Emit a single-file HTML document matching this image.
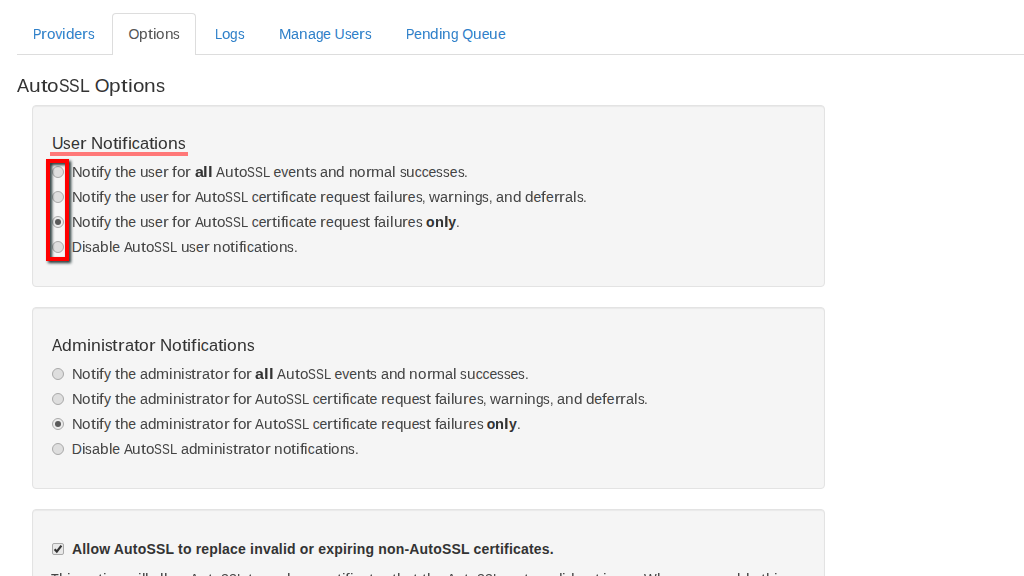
<!DOCTYPE html>
<html><head><meta charset="utf-8">
<style>
html,body{margin:0;padding:0;background:#fff;width:1024px;height:576px;overflow:hidden;position:relative}
body{font-family:"Liberation Sans",sans-serif;color:#444;font-size:14px}
.t{position:absolute;white-space:nowrap;line-height:20px}
.c span{display:inline-block;transform-origin:0 0}
.tab{color:#2f80c9}
.tabline{position:absolute;left:17px;top:54px;width:1007px;height:1px;background:#ddd}
.activetab{position:absolute;left:112px;top:13px;width:84px;height:42px;border:1px solid #ddd;border-bottom:none;border-radius:4px 4px 0 0;background:#fff;box-sizing:border-box}
.well{position:absolute;left:32px;width:793px;background:#f5f5f5;border:1px solid #e3e3e3;border-radius:4px;box-shadow:inset 0 1px 1px rgba(0,0,0,.05);box-sizing:border-box}
.radio{position:absolute;left:52px;width:12px;height:12px;border-radius:50%;box-sizing:border-box;border:1px solid #a9a9a9;background:#dedede}
.radio.on{background:#ececec}
.radio.on::after{content:"";position:absolute;left:2px;top:2px;width:6px;height:6px;border-radius:50%;background:#5a5a5a}
b{font-weight:700;color:#333}
</style></head><body>
<div class="tabline"></div>
<div class="activetab"></div>
<div class="t c" id="tab1" style="left:32.5px;top:24px;color:#2f80c9"><span style="width:8.51px;transform:scaleX(0.911)">P</span><span style="width:5.76px;transform:scaleX(1.234)">r</span><span style="width:8.46px;transform:scaleX(1.086)">o</span><span style="width:7.03px">v</span><span style="width:3.54px;transform:scaleX(1.138)">i</span><span style="width:8.54px;transform:scaleX(1.097)">d</span><span style="width:7.79px">e</span><span style="width:5.76px;transform:scaleX(1.234)">r</span><span style="width:6.68px;transform:scaleX(0.954)">s</span></div>
<div class="t c" id="tab2" style="left:128.5px;top:24px;color:#555"><span style="width:10.87px">O</span><span style="width:8.54px;transform:scaleX(1.097)">p</span><span style="width:4.94px;transform:scaleX(1.270)">t</span><span style="width:3.54px;transform:scaleX(1.138)">i</span><span style="width:8.46px;transform:scaleX(1.086)">o</span><span style="width:8.58px;transform:scaleX(1.102)">n</span><span style="width:6.68px;transform:scaleX(0.954)">s</span></div>
<div class="t c" id="tab3" style="left:214.5px;top:24px;color:#2f80c9"><span style="width:7.23px;transform:scaleX(0.928)">L</span><span style="width:8.46px;transform:scaleX(1.086)">o</span><span style="width:7.62px;transform:scaleX(0.978)">g</span><span style="width:6.68px;transform:scaleX(0.954)">s</span></div>
<div class="t c" id="tab4" style="left:278.5px;top:24px;color:#2f80c9"><span style="width:12.46px;transform:scaleX(1.068)">M</span><span style="width:7.99px;transform:scaleX(1.026)">a</span><span style="width:8.58px;transform:scaleX(1.102)">n</span><span style="width:7.99px;transform:scaleX(1.026)">a</span><span style="width:7.62px;transform:scaleX(0.978)">g</span><span style="width:7.79px">e</span><span style="width:3.64px">&nbsp;</span><span style="width:10.05px">U</span><span style="width:6.68px;transform:scaleX(0.954)">s</span><span style="width:7.79px">e</span><span style="width:5.76px;transform:scaleX(1.234)">r</span><span style="width:6.68px;transform:scaleX(0.954)">s</span></div>
<div class="t c" id="tab5" style="left:405.5px;top:24px;color:#2f80c9"><span style="width:8.51px;transform:scaleX(0.911)">P</span><span style="width:7.79px">e</span><span style="width:8.58px;transform:scaleX(1.102)">n</span><span style="width:8.54px;transform:scaleX(1.097)">d</span><span style="width:3.54px;transform:scaleX(1.138)">i</span><span style="width:8.58px;transform:scaleX(1.102)">n</span><span style="width:7.62px;transform:scaleX(0.978)">g</span><span style="width:3.64px">&nbsp;</span><span style="width:10.87px">Q</span><span style="width:8.58px;transform:scaleX(1.102)">u</span><span style="width:7.79px">e</span><span style="width:8.58px;transform:scaleX(1.102)">u</span><span style="width:7.79px">e</span></div>
<div class="t c" id="h1" style="left:17px;top:76px;font-size:19px;color:#333"><span style="width:12.06px;transform:scaleX(0.952)">A</span><span style="width:11.64px;transform:scaleX(1.102)">u</span><span style="width:6.71px;transform:scaleX(1.270)">t</span><span style="width:11.48px;transform:scaleX(1.086)">o</span><span style="width:10.55px;transform:scaleX(0.832)">S</span><span style="width:10.55px;transform:scaleX(0.832)">S</span><span style="width:9.81px;transform:scaleX(0.928)">L</span><span style="width:4.94px">&nbsp;</span><span style="width:14.75px">O</span><span style="width:11.60px;transform:scaleX(1.097)">p</span><span style="width:6.71px;transform:scaleX(1.270)">t</span><span style="width:4.81px;transform:scaleX(1.138)">i</span><span style="width:11.48px;transform:scaleX(1.086)">o</span><span style="width:11.64px;transform:scaleX(1.102)">n</span><span style="width:9.06px;transform:scaleX(0.954)">s</span></div>
<div class="well" style="top:105px;height:182px"></div>
<div class="t c" id="h2" style="left:52px;top:134px;font-size:16px;color:#333"><span style="width:11.48px">U</span><span style="width:7.63px;transform:scaleX(0.954)">s</span><span style="width:8.90px">e</span><span style="width:6.58px;transform:scaleX(1.234)">r</span><span style="width:4.16px">&nbsp;</span><span style="width:12.18px;transform:scaleX(1.054)">N</span><span style="width:9.66px;transform:scaleX(1.086)">o</span><span style="width:5.65px;transform:scaleX(1.270)">t</span><span style="width:4.05px;transform:scaleX(1.138)">i</span><span style="width:5.38px;transform:scaleX(1.209)">f</span><span style="width:4.05px;transform:scaleX(1.138)">i</span><span style="width:7.91px">c</span><span style="width:9.13px;transform:scaleX(1.026)">a</span><span style="width:5.65px;transform:scaleX(1.270)">t</span><span style="width:4.05px;transform:scaleX(1.138)">i</span><span style="width:9.66px;transform:scaleX(1.086)">o</span><span style="width:9.80px;transform:scaleX(1.102)">n</span><span style="width:7.63px;transform:scaleX(0.954)">s</span></div>
<div style="position:absolute;left:50px;top:152px;width:138px;height:4px;background:#ff7878"></div>
<div class="radio" style="top:166px"></div>
<div class="radio" style="top:191px"></div>
<div class="radio on" style="top:216px"></div>
<div class="radio" style="top:241px"></div>
<div class="t c" id="r10" style="left:71.8px;top:162px"><span style="width:10.66px;transform:scaleX(1.054)">N</span><span style="width:8.46px;transform:scaleX(1.086)">o</span><span style="width:4.94px;transform:scaleX(1.270)">t</span><span style="width:3.54px;transform:scaleX(1.138)">i</span><span style="width:4.70px;transform:scaleX(1.209)">f</span><span style="width:7.04px">y</span><span style="width:3.64px">&nbsp;</span><span style="width:4.94px;transform:scaleX(1.270)">t</span><span style="width:8.58px;transform:scaleX(1.102)">h</span><span style="width:7.79px">e</span><span style="width:3.64px">&nbsp;</span><span style="width:8.58px;transform:scaleX(1.102)">u</span><span style="width:6.68px;transform:scaleX(0.954)">s</span><span style="width:7.79px">e</span><span style="width:5.76px;transform:scaleX(1.234)">r</span><span style="width:3.64px">&nbsp;</span><span style="width:4.70px;transform:scaleX(1.209)">f</span><span style="width:8.46px;transform:scaleX(1.086)">o</span><span style="width:5.76px;transform:scaleX(1.234)">r</span><span style="width:3.64px">&nbsp;</span><b><span style="width:8.89px;transform:scaleX(1.141)">a</span><span style="width:4.62px;transform:scaleX(1.187)">l</span><span style="width:4.62px;transform:scaleX(1.187)">l</span></b><span style="width:3.64px">&nbsp;</span><span style="width:8.89px;transform:scaleX(0.952)">A</span><span style="width:8.58px;transform:scaleX(1.102)">u</span><span style="width:4.94px;transform:scaleX(1.270)">t</span><span style="width:8.46px;transform:scaleX(1.086)">o</span><span style="width:7.77px;transform:scaleX(0.832)">S</span><span style="width:7.77px;transform:scaleX(0.832)">S</span><span style="width:7.23px;transform:scaleX(0.928)">L</span><span style="width:3.64px">&nbsp;</span><span style="width:7.79px">e</span><span style="width:7.03px">v</span><span style="width:7.79px">e</span><span style="width:8.58px;transform:scaleX(1.102)">n</span><span style="width:4.94px;transform:scaleX(1.270)">t</span><span style="width:6.68px;transform:scaleX(0.954)">s</span><span style="width:3.64px">&nbsp;</span><span style="width:7.99px;transform:scaleX(1.026)">a</span><span style="width:8.58px;transform:scaleX(1.102)">n</span><span style="width:8.54px;transform:scaleX(1.097)">d</span><span style="width:3.64px">&nbsp;</span><span style="width:8.58px;transform:scaleX(1.102)">n</span><span style="width:8.46px;transform:scaleX(1.086)">o</span><span style="width:5.76px;transform:scaleX(1.234)">r</span><span style="width:13.02px;transform:scaleX(1.116)">m</span><span style="width:7.99px;transform:scaleX(1.026)">a</span><span style="width:3.54px;transform:scaleX(1.138)">l</span><span style="width:3.64px">&nbsp;</span><span style="width:6.68px;transform:scaleX(0.954)">s</span><span style="width:8.58px;transform:scaleX(1.102)">u</span><span style="width:6.92px">c</span><span style="width:6.92px">c</span><span style="width:7.79px">e</span><span style="width:6.68px;transform:scaleX(0.954)">s</span><span style="width:6.68px;transform:scaleX(0.954)">s</span><span style="width:7.79px">e</span><span style="width:6.68px;transform:scaleX(0.954)">s</span><span style="width:3.73px;transform:scaleX(0.957)">.</span></div>
<div class="t c" id="r11" style="left:71.8px;top:187px"><span style="width:10.66px;transform:scaleX(1.054)">N</span><span style="width:8.46px;transform:scaleX(1.086)">o</span><span style="width:4.94px;transform:scaleX(1.270)">t</span><span style="width:3.54px;transform:scaleX(1.138)">i</span><span style="width:4.70px;transform:scaleX(1.209)">f</span><span style="width:7.04px">y</span><span style="width:3.64px">&nbsp;</span><span style="width:4.94px;transform:scaleX(1.270)">t</span><span style="width:8.58px;transform:scaleX(1.102)">h</span><span style="width:7.79px">e</span><span style="width:3.64px">&nbsp;</span><span style="width:8.58px;transform:scaleX(1.102)">u</span><span style="width:6.68px;transform:scaleX(0.954)">s</span><span style="width:7.79px">e</span><span style="width:5.76px;transform:scaleX(1.234)">r</span><span style="width:3.64px">&nbsp;</span><span style="width:4.70px;transform:scaleX(1.209)">f</span><span style="width:8.46px;transform:scaleX(1.086)">o</span><span style="width:5.76px;transform:scaleX(1.234)">r</span><span style="width:3.64px">&nbsp;</span><span style="width:8.89px;transform:scaleX(0.952)">A</span><span style="width:8.58px;transform:scaleX(1.102)">u</span><span style="width:4.94px;transform:scaleX(1.270)">t</span><span style="width:8.46px;transform:scaleX(1.086)">o</span><span style="width:7.77px;transform:scaleX(0.832)">S</span><span style="width:7.77px;transform:scaleX(0.832)">S</span><span style="width:7.23px;transform:scaleX(0.928)">L</span><span style="width:3.64px">&nbsp;</span><span style="width:6.92px">c</span><span style="width:7.79px">e</span><span style="width:5.76px;transform:scaleX(1.234)">r</span><span style="width:4.94px;transform:scaleX(1.270)">t</span><span style="width:3.54px;transform:scaleX(1.138)">i</span><span style="width:4.70px;transform:scaleX(1.209)">f</span><span style="width:3.54px;transform:scaleX(1.138)">i</span><span style="width:6.92px">c</span><span style="width:7.99px;transform:scaleX(1.026)">a</span><span style="width:4.94px;transform:scaleX(1.270)">t</span><span style="width:7.79px">e</span><span style="width:3.64px">&nbsp;</span><span style="width:5.76px;transform:scaleX(1.234)">r</span><span style="width:7.79px">e</span><span style="width:8.54px;transform:scaleX(1.097)">q</span><span style="width:8.58px;transform:scaleX(1.102)">u</span><span style="width:7.79px">e</span><span style="width:6.68px;transform:scaleX(0.954)">s</span><span style="width:4.94px;transform:scaleX(1.270)">t</span><span style="width:3.64px">&nbsp;</span><span style="width:4.70px;transform:scaleX(1.209)">f</span><span style="width:7.99px;transform:scaleX(1.026)">a</span><span style="width:3.54px;transform:scaleX(1.138)">i</span><span style="width:3.54px;transform:scaleX(1.138)">l</span><span style="width:8.58px;transform:scaleX(1.102)">u</span><span style="width:5.76px;transform:scaleX(1.234)">r</span><span style="width:7.79px">e</span><span style="width:6.68px;transform:scaleX(0.954)">s</span><span style="width:3.50px;transform:scaleX(0.899)">,</span><span style="width:3.64px">&nbsp;</span><span style="width:10.94px;transform:scaleX(1.082)">w</span><span style="width:7.99px;transform:scaleX(1.026)">a</span><span style="width:5.76px;transform:scaleX(1.234)">r</span><span style="width:8.58px;transform:scaleX(1.102)">n</span><span style="width:3.54px;transform:scaleX(1.138)">i</span><span style="width:8.58px;transform:scaleX(1.102)">n</span><span style="width:7.62px;transform:scaleX(0.978)">g</span><span style="width:6.68px;transform:scaleX(0.954)">s</span><span style="width:3.50px;transform:scaleX(0.899)">,</span><span style="width:3.64px">&nbsp;</span><span style="width:7.99px;transform:scaleX(1.026)">a</span><span style="width:8.58px;transform:scaleX(1.102)">n</span><span style="width:8.54px;transform:scaleX(1.097)">d</span><span style="width:3.64px">&nbsp;</span><span style="width:8.54px;transform:scaleX(1.097)">d</span><span style="width:7.79px">e</span><span style="width:4.70px;transform:scaleX(1.209)">f</span><span style="width:7.79px">e</span><span style="width:5.76px;transform:scaleX(1.234)">r</span><span style="width:5.76px;transform:scaleX(1.234)">r</span><span style="width:7.99px;transform:scaleX(1.026)">a</span><span style="width:3.54px;transform:scaleX(1.138)">l</span><span style="width:6.68px;transform:scaleX(0.954)">s</span><span style="width:3.73px;transform:scaleX(0.957)">.</span></div>
<div class="t c" id="r12" style="left:71.8px;top:212px"><span style="width:10.66px;transform:scaleX(1.054)">N</span><span style="width:8.46px;transform:scaleX(1.086)">o</span><span style="width:4.94px;transform:scaleX(1.270)">t</span><span style="width:3.54px;transform:scaleX(1.138)">i</span><span style="width:4.70px;transform:scaleX(1.209)">f</span><span style="width:7.04px">y</span><span style="width:3.64px">&nbsp;</span><span style="width:4.94px;transform:scaleX(1.270)">t</span><span style="width:8.58px;transform:scaleX(1.102)">h</span><span style="width:7.79px">e</span><span style="width:3.64px">&nbsp;</span><span style="width:8.58px;transform:scaleX(1.102)">u</span><span style="width:6.68px;transform:scaleX(0.954)">s</span><span style="width:7.79px">e</span><span style="width:5.76px;transform:scaleX(1.234)">r</span><span style="width:3.64px">&nbsp;</span><span style="width:4.70px;transform:scaleX(1.209)">f</span><span style="width:8.46px;transform:scaleX(1.086)">o</span><span style="width:5.76px;transform:scaleX(1.234)">r</span><span style="width:3.64px">&nbsp;</span><span style="width:8.89px;transform:scaleX(0.952)">A</span><span style="width:8.58px;transform:scaleX(1.102)">u</span><span style="width:4.94px;transform:scaleX(1.270)">t</span><span style="width:8.46px;transform:scaleX(1.086)">o</span><span style="width:7.77px;transform:scaleX(0.832)">S</span><span style="width:7.77px;transform:scaleX(0.832)">S</span><span style="width:7.23px;transform:scaleX(0.928)">L</span><span style="width:3.64px">&nbsp;</span><span style="width:6.92px">c</span><span style="width:7.79px">e</span><span style="width:5.76px;transform:scaleX(1.234)">r</span><span style="width:4.94px;transform:scaleX(1.270)">t</span><span style="width:3.54px;transform:scaleX(1.138)">i</span><span style="width:4.70px;transform:scaleX(1.209)">f</span><span style="width:3.54px;transform:scaleX(1.138)">i</span><span style="width:6.92px">c</span><span style="width:7.99px;transform:scaleX(1.026)">a</span><span style="width:4.94px;transform:scaleX(1.270)">t</span><span style="width:7.79px">e</span><span style="width:3.64px">&nbsp;</span><span style="width:5.76px;transform:scaleX(1.234)">r</span><span style="width:7.79px">e</span><span style="width:8.54px;transform:scaleX(1.097)">q</span><span style="width:8.58px;transform:scaleX(1.102)">u</span><span style="width:7.79px">e</span><span style="width:6.68px;transform:scaleX(0.954)">s</span><span style="width:4.94px;transform:scaleX(1.270)">t</span><span style="width:3.64px">&nbsp;</span><span style="width:4.70px;transform:scaleX(1.209)">f</span><span style="width:7.99px;transform:scaleX(1.026)">a</span><span style="width:3.54px;transform:scaleX(1.138)">i</span><span style="width:3.54px;transform:scaleX(1.138)">l</span><span style="width:8.58px;transform:scaleX(1.102)">u</span><span style="width:5.76px;transform:scaleX(1.234)">r</span><span style="width:7.79px">e</span><span style="width:6.68px;transform:scaleX(0.954)">s</span><span style="width:3.64px">&nbsp;</span><b><span style="width:8.68px">o</span><span style="width:8.96px;transform:scaleX(1.047)">n</span><span style="width:4.62px;transform:scaleX(1.187)">l</span><span style="width:7.93px">y</span></b><span style="width:3.73px;transform:scaleX(0.957)">.</span></div>
<div class="t c" id="r13" style="left:71.8px;top:237px"><span style="width:10.11px">D</span><span style="width:3.54px;transform:scaleX(1.138)">i</span><span style="width:6.68px;transform:scaleX(0.954)">s</span><span style="width:7.99px;transform:scaleX(1.026)">a</span><span style="width:8.54px;transform:scaleX(1.097)">b</span><span style="width:3.54px;transform:scaleX(1.138)">l</span><span style="width:7.79px">e</span><span style="width:3.64px">&nbsp;</span><span style="width:8.89px;transform:scaleX(0.952)">A</span><span style="width:8.58px;transform:scaleX(1.102)">u</span><span style="width:4.94px;transform:scaleX(1.270)">t</span><span style="width:8.46px;transform:scaleX(1.086)">o</span><span style="width:7.77px;transform:scaleX(0.832)">S</span><span style="width:7.77px;transform:scaleX(0.832)">S</span><span style="width:7.23px;transform:scaleX(0.928)">L</span><span style="width:3.64px">&nbsp;</span><span style="width:8.58px;transform:scaleX(1.102)">u</span><span style="width:6.68px;transform:scaleX(0.954)">s</span><span style="width:7.79px">e</span><span style="width:5.76px;transform:scaleX(1.234)">r</span><span style="width:3.64px">&nbsp;</span><span style="width:8.58px;transform:scaleX(1.102)">n</span><span style="width:8.46px;transform:scaleX(1.086)">o</span><span style="width:4.94px;transform:scaleX(1.270)">t</span><span style="width:3.54px;transform:scaleX(1.138)">i</span><span style="width:4.70px;transform:scaleX(1.209)">f</span><span style="width:3.54px;transform:scaleX(1.138)">i</span><span style="width:6.92px">c</span><span style="width:7.99px;transform:scaleX(1.026)">a</span><span style="width:4.94px;transform:scaleX(1.270)">t</span><span style="width:3.54px;transform:scaleX(1.138)">i</span><span style="width:8.46px;transform:scaleX(1.086)">o</span><span style="width:8.58px;transform:scaleX(1.102)">n</span><span style="width:6.68px;transform:scaleX(0.954)">s</span><span style="width:3.73px;transform:scaleX(0.957)">.</span></div>
<div style="position:absolute;left:46px;top:159px;width:23px;height:102px;box-sizing:border-box;border:4px solid #f00;filter:drop-shadow(2.5px 2.5px 1.6px rgba(20,40,40,.95))"></div>
<div class="well" style="top:307px;height:182px"></div>
<div class="t c" id="h3" style="left:52px;top:336px;font-size:16px;color:#333"><span style="width:10.16px;transform:scaleX(0.952)">A</span><span style="width:9.77px;transform:scaleX(1.097)">d</span><span style="width:14.88px;transform:scaleX(1.116)">m</span><span style="width:4.05px;transform:scaleX(1.138)">i</span><span style="width:9.80px;transform:scaleX(1.102)">n</span><span style="width:4.05px;transform:scaleX(1.138)">i</span><span style="width:7.63px;transform:scaleX(0.954)">s</span><span style="width:5.65px;transform:scaleX(1.270)">t</span><span style="width:6.58px;transform:scaleX(1.234)">r</span><span style="width:9.13px;transform:scaleX(1.026)">a</span><span style="width:5.65px;transform:scaleX(1.270)">t</span><span style="width:9.66px;transform:scaleX(1.086)">o</span><span style="width:6.58px;transform:scaleX(1.234)">r</span><span style="width:4.16px">&nbsp;</span><span style="width:12.18px;transform:scaleX(1.054)">N</span><span style="width:9.66px;transform:scaleX(1.086)">o</span><span style="width:5.65px;transform:scaleX(1.270)">t</span><span style="width:4.05px;transform:scaleX(1.138)">i</span><span style="width:5.38px;transform:scaleX(1.209)">f</span><span style="width:4.05px;transform:scaleX(1.138)">i</span><span style="width:7.91px">c</span><span style="width:9.13px;transform:scaleX(1.026)">a</span><span style="width:5.65px;transform:scaleX(1.270)">t</span><span style="width:4.05px;transform:scaleX(1.138)">i</span><span style="width:9.66px;transform:scaleX(1.086)">o</span><span style="width:9.80px;transform:scaleX(1.102)">n</span><span style="width:7.63px;transform:scaleX(0.954)">s</span></div>
<div class="radio" style="top:368px"></div>
<div class="radio" style="top:393px"></div>
<div class="radio on" style="top:418px"></div>
<div class="radio" style="top:443px"></div>
<div class="t c" id="r20" style="left:71.8px;top:364px"><span style="width:10.66px;transform:scaleX(1.054)">N</span><span style="width:8.46px;transform:scaleX(1.086)">o</span><span style="width:4.94px;transform:scaleX(1.270)">t</span><span style="width:3.54px;transform:scaleX(1.138)">i</span><span style="width:4.70px;transform:scaleX(1.209)">f</span><span style="width:7.04px">y</span><span style="width:3.64px">&nbsp;</span><span style="width:4.94px;transform:scaleX(1.270)">t</span><span style="width:8.58px;transform:scaleX(1.102)">h</span><span style="width:7.79px">e</span><span style="width:3.64px">&nbsp;</span><span style="width:7.99px;transform:scaleX(1.026)">a</span><span style="width:8.54px;transform:scaleX(1.097)">d</span><span style="width:13.02px;transform:scaleX(1.116)">m</span><span style="width:3.54px;transform:scaleX(1.138)">i</span><span style="width:8.58px;transform:scaleX(1.102)">n</span><span style="width:3.54px;transform:scaleX(1.138)">i</span><span style="width:6.68px;transform:scaleX(0.954)">s</span><span style="width:4.94px;transform:scaleX(1.270)">t</span><span style="width:5.76px;transform:scaleX(1.234)">r</span><span style="width:7.99px;transform:scaleX(1.026)">a</span><span style="width:4.94px;transform:scaleX(1.270)">t</span><span style="width:8.46px;transform:scaleX(1.086)">o</span><span style="width:5.76px;transform:scaleX(1.234)">r</span><span style="width:3.64px">&nbsp;</span><span style="width:4.70px;transform:scaleX(1.209)">f</span><span style="width:8.46px;transform:scaleX(1.086)">o</span><span style="width:5.76px;transform:scaleX(1.234)">r</span><span style="width:3.64px">&nbsp;</span><b><span style="width:8.89px;transform:scaleX(1.141)">a</span><span style="width:4.62px;transform:scaleX(1.187)">l</span><span style="width:4.62px;transform:scaleX(1.187)">l</span></b><span style="width:3.64px">&nbsp;</span><span style="width:8.89px;transform:scaleX(0.952)">A</span><span style="width:8.58px;transform:scaleX(1.102)">u</span><span style="width:4.94px;transform:scaleX(1.270)">t</span><span style="width:8.46px;transform:scaleX(1.086)">o</span><span style="width:7.77px;transform:scaleX(0.832)">S</span><span style="width:7.77px;transform:scaleX(0.832)">S</span><span style="width:7.23px;transform:scaleX(0.928)">L</span><span style="width:3.64px">&nbsp;</span><span style="width:7.79px">e</span><span style="width:7.03px">v</span><span style="width:7.79px">e</span><span style="width:8.58px;transform:scaleX(1.102)">n</span><span style="width:4.94px;transform:scaleX(1.270)">t</span><span style="width:6.68px;transform:scaleX(0.954)">s</span><span style="width:3.64px">&nbsp;</span><span style="width:7.99px;transform:scaleX(1.026)">a</span><span style="width:8.58px;transform:scaleX(1.102)">n</span><span style="width:8.54px;transform:scaleX(1.097)">d</span><span style="width:3.64px">&nbsp;</span><span style="width:8.58px;transform:scaleX(1.102)">n</span><span style="width:8.46px;transform:scaleX(1.086)">o</span><span style="width:5.76px;transform:scaleX(1.234)">r</span><span style="width:13.02px;transform:scaleX(1.116)">m</span><span style="width:7.99px;transform:scaleX(1.026)">a</span><span style="width:3.54px;transform:scaleX(1.138)">l</span><span style="width:3.64px">&nbsp;</span><span style="width:6.68px;transform:scaleX(0.954)">s</span><span style="width:8.58px;transform:scaleX(1.102)">u</span><span style="width:6.92px">c</span><span style="width:6.92px">c</span><span style="width:7.79px">e</span><span style="width:6.68px;transform:scaleX(0.954)">s</span><span style="width:6.68px;transform:scaleX(0.954)">s</span><span style="width:7.79px">e</span><span style="width:6.68px;transform:scaleX(0.954)">s</span><span style="width:3.73px;transform:scaleX(0.957)">.</span></div>
<div class="t c" id="r21" style="left:71.8px;top:389px"><span style="width:10.66px;transform:scaleX(1.054)">N</span><span style="width:8.46px;transform:scaleX(1.086)">o</span><span style="width:4.94px;transform:scaleX(1.270)">t</span><span style="width:3.54px;transform:scaleX(1.138)">i</span><span style="width:4.70px;transform:scaleX(1.209)">f</span><span style="width:7.04px">y</span><span style="width:3.64px">&nbsp;</span><span style="width:4.94px;transform:scaleX(1.270)">t</span><span style="width:8.58px;transform:scaleX(1.102)">h</span><span style="width:7.79px">e</span><span style="width:3.64px">&nbsp;</span><span style="width:7.99px;transform:scaleX(1.026)">a</span><span style="width:8.54px;transform:scaleX(1.097)">d</span><span style="width:13.02px;transform:scaleX(1.116)">m</span><span style="width:3.54px;transform:scaleX(1.138)">i</span><span style="width:8.58px;transform:scaleX(1.102)">n</span><span style="width:3.54px;transform:scaleX(1.138)">i</span><span style="width:6.68px;transform:scaleX(0.954)">s</span><span style="width:4.94px;transform:scaleX(1.270)">t</span><span style="width:5.76px;transform:scaleX(1.234)">r</span><span style="width:7.99px;transform:scaleX(1.026)">a</span><span style="width:4.94px;transform:scaleX(1.270)">t</span><span style="width:8.46px;transform:scaleX(1.086)">o</span><span style="width:5.76px;transform:scaleX(1.234)">r</span><span style="width:3.64px">&nbsp;</span><span style="width:4.70px;transform:scaleX(1.209)">f</span><span style="width:8.46px;transform:scaleX(1.086)">o</span><span style="width:5.76px;transform:scaleX(1.234)">r</span><span style="width:3.64px">&nbsp;</span><span style="width:8.89px;transform:scaleX(0.952)">A</span><span style="width:8.58px;transform:scaleX(1.102)">u</span><span style="width:4.94px;transform:scaleX(1.270)">t</span><span style="width:8.46px;transform:scaleX(1.086)">o</span><span style="width:7.77px;transform:scaleX(0.832)">S</span><span style="width:7.77px;transform:scaleX(0.832)">S</span><span style="width:7.23px;transform:scaleX(0.928)">L</span><span style="width:3.64px">&nbsp;</span><span style="width:6.92px">c</span><span style="width:7.79px">e</span><span style="width:5.76px;transform:scaleX(1.234)">r</span><span style="width:4.94px;transform:scaleX(1.270)">t</span><span style="width:3.54px;transform:scaleX(1.138)">i</span><span style="width:4.70px;transform:scaleX(1.209)">f</span><span style="width:3.54px;transform:scaleX(1.138)">i</span><span style="width:6.92px">c</span><span style="width:7.99px;transform:scaleX(1.026)">a</span><span style="width:4.94px;transform:scaleX(1.270)">t</span><span style="width:7.79px">e</span><span style="width:3.64px">&nbsp;</span><span style="width:5.76px;transform:scaleX(1.234)">r</span><span style="width:7.79px">e</span><span style="width:8.54px;transform:scaleX(1.097)">q</span><span style="width:8.58px;transform:scaleX(1.102)">u</span><span style="width:7.79px">e</span><span style="width:6.68px;transform:scaleX(0.954)">s</span><span style="width:4.94px;transform:scaleX(1.270)">t</span><span style="width:3.64px">&nbsp;</span><span style="width:4.70px;transform:scaleX(1.209)">f</span><span style="width:7.99px;transform:scaleX(1.026)">a</span><span style="width:3.54px;transform:scaleX(1.138)">i</span><span style="width:3.54px;transform:scaleX(1.138)">l</span><span style="width:8.58px;transform:scaleX(1.102)">u</span><span style="width:5.76px;transform:scaleX(1.234)">r</span><span style="width:7.79px">e</span><span style="width:6.68px;transform:scaleX(0.954)">s</span><span style="width:3.50px;transform:scaleX(0.899)">,</span><span style="width:3.64px">&nbsp;</span><span style="width:10.94px;transform:scaleX(1.082)">w</span><span style="width:7.99px;transform:scaleX(1.026)">a</span><span style="width:5.76px;transform:scaleX(1.234)">r</span><span style="width:8.58px;transform:scaleX(1.102)">n</span><span style="width:3.54px;transform:scaleX(1.138)">i</span><span style="width:8.58px;transform:scaleX(1.102)">n</span><span style="width:7.62px;transform:scaleX(0.978)">g</span><span style="width:6.68px;transform:scaleX(0.954)">s</span><span style="width:3.50px;transform:scaleX(0.899)">,</span><span style="width:3.64px">&nbsp;</span><span style="width:7.99px;transform:scaleX(1.026)">a</span><span style="width:8.58px;transform:scaleX(1.102)">n</span><span style="width:8.54px;transform:scaleX(1.097)">d</span><span style="width:3.64px">&nbsp;</span><span style="width:8.54px;transform:scaleX(1.097)">d</span><span style="width:7.79px">e</span><span style="width:4.70px;transform:scaleX(1.209)">f</span><span style="width:7.79px">e</span><span style="width:5.76px;transform:scaleX(1.234)">r</span><span style="width:5.76px;transform:scaleX(1.234)">r</span><span style="width:7.99px;transform:scaleX(1.026)">a</span><span style="width:3.54px;transform:scaleX(1.138)">l</span><span style="width:6.68px;transform:scaleX(0.954)">s</span><span style="width:3.73px;transform:scaleX(0.957)">.</span></div>
<div class="t c" id="r22" style="left:71.8px;top:414px"><span style="width:10.66px;transform:scaleX(1.054)">N</span><span style="width:8.46px;transform:scaleX(1.086)">o</span><span style="width:4.94px;transform:scaleX(1.270)">t</span><span style="width:3.54px;transform:scaleX(1.138)">i</span><span style="width:4.70px;transform:scaleX(1.209)">f</span><span style="width:7.04px">y</span><span style="width:3.64px">&nbsp;</span><span style="width:4.94px;transform:scaleX(1.270)">t</span><span style="width:8.58px;transform:scaleX(1.102)">h</span><span style="width:7.79px">e</span><span style="width:3.64px">&nbsp;</span><span style="width:7.99px;transform:scaleX(1.026)">a</span><span style="width:8.54px;transform:scaleX(1.097)">d</span><span style="width:13.02px;transform:scaleX(1.116)">m</span><span style="width:3.54px;transform:scaleX(1.138)">i</span><span style="width:8.58px;transform:scaleX(1.102)">n</span><span style="width:3.54px;transform:scaleX(1.138)">i</span><span style="width:6.68px;transform:scaleX(0.954)">s</span><span style="width:4.94px;transform:scaleX(1.270)">t</span><span style="width:5.76px;transform:scaleX(1.234)">r</span><span style="width:7.99px;transform:scaleX(1.026)">a</span><span style="width:4.94px;transform:scaleX(1.270)">t</span><span style="width:8.46px;transform:scaleX(1.086)">o</span><span style="width:5.76px;transform:scaleX(1.234)">r</span><span style="width:3.64px">&nbsp;</span><span style="width:4.70px;transform:scaleX(1.209)">f</span><span style="width:8.46px;transform:scaleX(1.086)">o</span><span style="width:5.76px;transform:scaleX(1.234)">r</span><span style="width:3.64px">&nbsp;</span><span style="width:8.89px;transform:scaleX(0.952)">A</span><span style="width:8.58px;transform:scaleX(1.102)">u</span><span style="width:4.94px;transform:scaleX(1.270)">t</span><span style="width:8.46px;transform:scaleX(1.086)">o</span><span style="width:7.77px;transform:scaleX(0.832)">S</span><span style="width:7.77px;transform:scaleX(0.832)">S</span><span style="width:7.23px;transform:scaleX(0.928)">L</span><span style="width:3.64px">&nbsp;</span><span style="width:6.92px">c</span><span style="width:7.79px">e</span><span style="width:5.76px;transform:scaleX(1.234)">r</span><span style="width:4.94px;transform:scaleX(1.270)">t</span><span style="width:3.54px;transform:scaleX(1.138)">i</span><span style="width:4.70px;transform:scaleX(1.209)">f</span><span style="width:3.54px;transform:scaleX(1.138)">i</span><span style="width:6.92px">c</span><span style="width:7.99px;transform:scaleX(1.026)">a</span><span style="width:4.94px;transform:scaleX(1.270)">t</span><span style="width:7.79px">e</span><span style="width:3.64px">&nbsp;</span><span style="width:5.76px;transform:scaleX(1.234)">r</span><span style="width:7.79px">e</span><span style="width:8.54px;transform:scaleX(1.097)">q</span><span style="width:8.58px;transform:scaleX(1.102)">u</span><span style="width:7.79px">e</span><span style="width:6.68px;transform:scaleX(0.954)">s</span><span style="width:4.94px;transform:scaleX(1.270)">t</span><span style="width:3.64px">&nbsp;</span><span style="width:4.70px;transform:scaleX(1.209)">f</span><span style="width:7.99px;transform:scaleX(1.026)">a</span><span style="width:3.54px;transform:scaleX(1.138)">i</span><span style="width:3.54px;transform:scaleX(1.138)">l</span><span style="width:8.58px;transform:scaleX(1.102)">u</span><span style="width:5.76px;transform:scaleX(1.234)">r</span><span style="width:7.79px">e</span><span style="width:6.68px;transform:scaleX(0.954)">s</span><span style="width:3.64px">&nbsp;</span><b><span style="width:8.68px">o</span><span style="width:8.96px;transform:scaleX(1.047)">n</span><span style="width:4.62px;transform:scaleX(1.187)">l</span><span style="width:7.93px">y</span></b><span style="width:3.73px;transform:scaleX(0.957)">.</span></div>
<div class="t c" id="r23" style="left:71.8px;top:439px"><span style="width:10.11px">D</span><span style="width:3.54px;transform:scaleX(1.138)">i</span><span style="width:6.68px;transform:scaleX(0.954)">s</span><span style="width:7.99px;transform:scaleX(1.026)">a</span><span style="width:8.54px;transform:scaleX(1.097)">b</span><span style="width:3.54px;transform:scaleX(1.138)">l</span><span style="width:7.79px">e</span><span style="width:3.64px">&nbsp;</span><span style="width:8.89px;transform:scaleX(0.952)">A</span><span style="width:8.58px;transform:scaleX(1.102)">u</span><span style="width:4.94px;transform:scaleX(1.270)">t</span><span style="width:8.46px;transform:scaleX(1.086)">o</span><span style="width:7.77px;transform:scaleX(0.832)">S</span><span style="width:7.77px;transform:scaleX(0.832)">S</span><span style="width:7.23px;transform:scaleX(0.928)">L</span><span style="width:3.64px">&nbsp;</span><span style="width:7.99px;transform:scaleX(1.026)">a</span><span style="width:8.54px;transform:scaleX(1.097)">d</span><span style="width:13.02px;transform:scaleX(1.116)">m</span><span style="width:3.54px;transform:scaleX(1.138)">i</span><span style="width:8.58px;transform:scaleX(1.102)">n</span><span style="width:3.54px;transform:scaleX(1.138)">i</span><span style="width:6.68px;transform:scaleX(0.954)">s</span><span style="width:4.94px;transform:scaleX(1.270)">t</span><span style="width:5.76px;transform:scaleX(1.234)">r</span><span style="width:7.99px;transform:scaleX(1.026)">a</span><span style="width:4.94px;transform:scaleX(1.270)">t</span><span style="width:8.46px;transform:scaleX(1.086)">o</span><span style="width:5.76px;transform:scaleX(1.234)">r</span><span style="width:3.64px">&nbsp;</span><span style="width:8.58px;transform:scaleX(1.102)">n</span><span style="width:8.46px;transform:scaleX(1.086)">o</span><span style="width:4.94px;transform:scaleX(1.270)">t</span><span style="width:3.54px;transform:scaleX(1.138)">i</span><span style="width:4.70px;transform:scaleX(1.209)">f</span><span style="width:3.54px;transform:scaleX(1.138)">i</span><span style="width:6.92px">c</span><span style="width:7.99px;transform:scaleX(1.026)">a</span><span style="width:4.94px;transform:scaleX(1.270)">t</span><span style="width:3.54px;transform:scaleX(1.138)">i</span><span style="width:8.46px;transform:scaleX(1.086)">o</span><span style="width:8.58px;transform:scaleX(1.102)">n</span><span style="width:6.68px;transform:scaleX(0.954)">s</span><span style="width:3.73px;transform:scaleX(0.957)">.</span></div>
<div class="well" style="top:509px;height:120px"></div>
<div style="position:absolute;left:52px;top:543px;width:12px;height:12px;box-sizing:border-box;border:1px solid #a9a9a9;border-radius:2px;background:#e8e8e8"><svg width="12" height="12" style="position:absolute;left:-1px;top:-1px" viewBox="0 0 12 12"><path d="M2.6 6.3 L4.8 8.6 L9.4 2.6" fill="none" stroke="#333" stroke-width="2.2"/></svg></div>
<div class="t" style="left:72px;top:539px;font-weight:700;color:#333;letter-spacing:0.185px">Allow AutoSSL to replace invalid or expiring non-AutoSSL certificates.</div>
<div class="t c" id="p1" style="left:51px;top:569px"><span style="width:7.72px;transform:scaleX(0.903)">T</span><span style="width:8.58px;transform:scaleX(1.102)">h</span><span style="width:3.54px;transform:scaleX(1.138)">i</span><span style="width:6.68px;transform:scaleX(0.954)">s</span><span style="width:3.64px">&nbsp;</span><span style="width:8.46px;transform:scaleX(1.086)">o</span><span style="width:8.54px;transform:scaleX(1.097)">p</span><span style="width:4.94px;transform:scaleX(1.270)">t</span><span style="width:3.54px;transform:scaleX(1.138)">i</span><span style="width:8.46px;transform:scaleX(1.086)">o</span><span style="width:8.58px;transform:scaleX(1.102)">n</span><span style="width:3.64px">&nbsp;</span><span style="width:10.94px;transform:scaleX(1.082)">w</span><span style="width:3.54px;transform:scaleX(1.138)">i</span><span style="width:3.54px;transform:scaleX(1.138)">l</span><span style="width:3.54px;transform:scaleX(1.138)">l</span><span style="width:3.64px">&nbsp;</span><span style="width:7.99px;transform:scaleX(1.026)">a</span><span style="width:3.54px;transform:scaleX(1.138)">l</span><span style="width:3.54px;transform:scaleX(1.138)">l</span><span style="width:8.46px;transform:scaleX(1.086)">o</span><span style="width:10.94px;transform:scaleX(1.082)">w</span><span style="width:3.64px">&nbsp;</span><span style="width:8.89px;transform:scaleX(0.952)">A</span><span style="width:8.58px;transform:scaleX(1.102)">u</span><span style="width:4.94px;transform:scaleX(1.270)">t</span><span style="width:8.46px;transform:scaleX(1.086)">o</span><span style="width:7.77px;transform:scaleX(0.832)">S</span><span style="width:7.77px;transform:scaleX(0.832)">S</span><span style="width:7.23px;transform:scaleX(0.928)">L</span><span style="width:3.64px">&nbsp;</span><span style="width:4.94px;transform:scaleX(1.270)">t</span><span style="width:8.46px;transform:scaleX(1.086)">o</span><span style="width:3.64px">&nbsp;</span><span style="width:5.76px;transform:scaleX(1.234)">r</span><span style="width:7.79px">e</span><span style="width:8.54px;transform:scaleX(1.097)">p</span><span style="width:3.54px;transform:scaleX(1.138)">l</span><span style="width:7.99px;transform:scaleX(1.026)">a</span><span style="width:6.92px">c</span><span style="width:7.79px">e</span><span style="width:3.64px">&nbsp;</span><span style="width:6.92px">c</span><span style="width:7.79px">e</span><span style="width:5.76px;transform:scaleX(1.234)">r</span><span style="width:4.94px;transform:scaleX(1.270)">t</span><span style="width:3.54px;transform:scaleX(1.138)">i</span><span style="width:4.70px;transform:scaleX(1.209)">f</span><span style="width:3.54px;transform:scaleX(1.138)">i</span><span style="width:6.92px">c</span><span style="width:7.99px;transform:scaleX(1.026)">a</span><span style="width:4.94px;transform:scaleX(1.270)">t</span><span style="width:7.79px">e</span><span style="width:6.68px;transform:scaleX(0.954)">s</span><span style="width:3.64px">&nbsp;</span><span style="width:4.94px;transform:scaleX(1.270)">t</span><span style="width:8.58px;transform:scaleX(1.102)">h</span><span style="width:7.99px;transform:scaleX(1.026)">a</span><span style="width:4.94px;transform:scaleX(1.270)">t</span><span style="width:3.64px">&nbsp;</span><span style="width:4.94px;transform:scaleX(1.270)">t</span><span style="width:8.58px;transform:scaleX(1.102)">h</span><span style="width:7.79px">e</span><span style="width:3.64px">&nbsp;</span><span style="width:8.89px;transform:scaleX(0.952)">A</span><span style="width:8.58px;transform:scaleX(1.102)">u</span><span style="width:4.94px;transform:scaleX(1.270)">t</span><span style="width:8.46px;transform:scaleX(1.086)">o</span><span style="width:7.77px;transform:scaleX(0.832)">S</span><span style="width:7.77px;transform:scaleX(0.832)">S</span><span style="width:7.23px;transform:scaleX(0.928)">L</span><span style="width:3.64px">&nbsp;</span><span style="width:6.68px;transform:scaleX(0.954)">s</span><span style="width:7.04px">y</span><span style="width:6.68px;transform:scaleX(0.954)">s</span><span style="width:4.94px;transform:scaleX(1.270)">t</span><span style="width:7.79px">e</span><span style="width:13.02px;transform:scaleX(1.116)">m</span><span style="width:3.64px">&nbsp;</span><span style="width:8.54px;transform:scaleX(1.097)">d</span><span style="width:3.54px;transform:scaleX(1.138)">i</span><span style="width:8.54px;transform:scaleX(1.097)">d</span><span style="width:3.64px">&nbsp;</span><span style="width:8.58px;transform:scaleX(1.102)">n</span><span style="width:8.46px;transform:scaleX(1.086)">o</span><span style="width:4.94px;transform:scaleX(1.270)">t</span><span style="width:3.64px">&nbsp;</span><span style="width:3.54px;transform:scaleX(1.138)">i</span><span style="width:6.68px;transform:scaleX(0.954)">s</span><span style="width:6.68px;transform:scaleX(0.954)">s</span><span style="width:8.58px;transform:scaleX(1.102)">u</span><span style="width:7.79px">e</span><span style="width:3.73px;transform:scaleX(0.957)">.</span><span style="width:3.64px">&nbsp;</span><span style="width:12.70px;transform:scaleX(0.961)">W</span><span style="width:8.58px;transform:scaleX(1.102)">h</span><span style="width:7.79px">e</span><span style="width:8.58px;transform:scaleX(1.102)">n</span><span style="width:3.64px">&nbsp;</span><span style="width:7.04px">y</span><span style="width:8.46px;transform:scaleX(1.086)">o</span><span style="width:8.58px;transform:scaleX(1.102)">u</span><span style="width:3.64px">&nbsp;</span><span style="width:7.79px">e</span><span style="width:8.58px;transform:scaleX(1.102)">n</span><span style="width:7.99px;transform:scaleX(1.026)">a</span><span style="width:8.54px;transform:scaleX(1.097)">b</span><span style="width:3.54px;transform:scaleX(1.138)">l</span><span style="width:7.79px">e</span><span style="width:3.64px">&nbsp;</span><span style="width:4.94px;transform:scaleX(1.270)">t</span><span style="width:8.58px;transform:scaleX(1.102)">h</span><span style="width:3.54px;transform:scaleX(1.138)">i</span><span style="width:6.68px;transform:scaleX(0.954)">s</span></div>
</body></html>
